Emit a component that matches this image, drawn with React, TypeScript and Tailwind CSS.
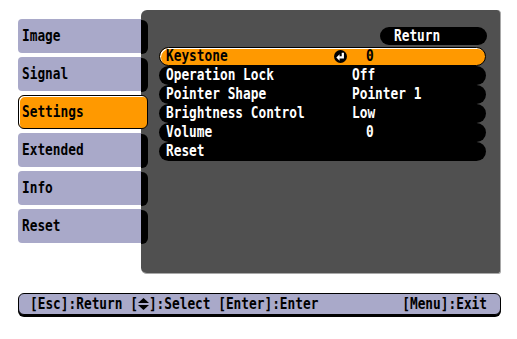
import React from "react";

const tabs = ["Image", "Signal", "Settings", "Extended", "Info", "Reset"];

const rows = [
  { label: "Keystone", value: "0", active: true },
  { label: "Operation Lock", value: "Off" },
  { label: "Pointer Shape", value: "Pointer 1" },
  { label: "Brightness Control", value: "Low" },
  { label: "Volume", value: "0", indent: true },
  { label: "Reset", value: "" },
];

// tall condensed OSD lettering
const T = ({ children }: { children: React.ReactNode }) => (
  <span className="inline-block scale-y-[1.2] whitespace-pre">{children}</span>
);

const EnterIcon = () => (
  <svg width="13" height="13" viewBox="0 0 14 14">
    <circle cx="7" cy="7" r="7" fill="#000" />
    <path d="M9.5 3 V8 H5.5" stroke="#fff" strokeWidth="2.4" fill="none" />
    <polygon points="2.5,8 6,4.5 6,11.5" fill="#fff" />
  </svg>
);

const UpDown = () => (
  <svg width="11" height="12" viewBox="0 0 11 12" className="inline-block align-[-1px]">
    <polygon points="5.5,0 11,5 0,5" fill="#000" />
    <polygon points="0,7 11,7 5.5,12" fill="#000" />
  </svg>
);

export default function App() {
  return (
    <div
      className="w-[517px] h-[339px] bg-white overflow-hidden text-[12.8px] font-bold leading-none"
      style={{ fontFamily: '"DejaVu Sans Mono", "Liberation Mono", monospace' }}
    >
      <div className="flex pt-[10px] pl-[18px]">
        {/* left tabs */}
        <div className="w-[123px] pt-[9px] flex flex-col gap-[4px]">
          {tabs.map((t) =>
            t === "Settings" ? (
              <div
                key={t}
                className="relative z-10 w-[130px] h-[34px] flex items-center pl-[3px] bg-[#ff9900] text-black border border-black rounded-[6px] shadow-[inset_1px_1px_0_#fff]"
              >
                <T>{t}</T>
              </div>
            ) : (
              <div
                key={t}
                className="h-[34px] flex items-center pl-[4px] bg-[#a9a9c9] text-black rounded-l-[4px]"
              >
                <T>{t}</T>
              </div>
            )
          )}
        </div>

        {/* main panel */}
        <div className="w-[360px] h-[264px] flex bg-[#505050] rounded-l-[6px] rounded-tr-[4px] rounded-br-[3px] border-r border-b border-[#a8a8a8]">
          <div className="w-[7px] pt-[10px] flex flex-col gap-[4px]">
            {tabs.map((t) => (
              <div
                key={t}
                className={t === "Settings" ? "h-[34px]" : "h-[34px] bg-black rounded-r-[6px]"}
              />
            ))}
          </div>
          <div className="flex-1 flex flex-col pt-[17px] pl-[11px] pr-[13px]">
            <div className="self-end w-[107px] h-[18px] bg-black rounded-full flex items-center pl-[14px] text-white">
              <T>Return</T>
            </div>
            <div className="mt-[2px] mr-[1px] flex flex-col">
              {rows.map((r) => (
                <div
                  key={r.label}
                  className={
                    r.active
                      ? "h-[19px] flex items-center rounded-full bg-[#ff9900] border border-black pl-[6px] text-black shadow-[inset_1px_1px_0_#fff]"
                      : "h-[19px] flex items-center rounded-full bg-black pl-[7px] text-white"
                  }
                >
                  <span className="w-[168px]">
                    <T>{r.label}</T>
                  </span>
                  <span className="w-[18px] flex items-center">{r.active && <EnterIcon />}</span>
                  <span className={r.active || r.indent ? "pl-[14px]" : ""}>
                    <T>{r.value}</T>
                  </span>
                </div>
              ))}
            </div>
          </div>
        </div>
      </div>

      {/* bottom help bar */}
      <div className="ml-[18px] mt-[19px] w-[483px] h-[22px] bg-[#a9a9c9] border border-black rounded-[6px] shadow-[0_2px_0_#000] flex items-center justify-between pl-[11px] pr-[13px] text-black">
        <span className="flex items-center">
          <T>[Esc]:Return [</T>
          <UpDown />
          <T>]:Select [Enter]:Enter</T>
        </span>
        <T>[Menu]:Exit</T>
      </div>
    </div>
  );
}
